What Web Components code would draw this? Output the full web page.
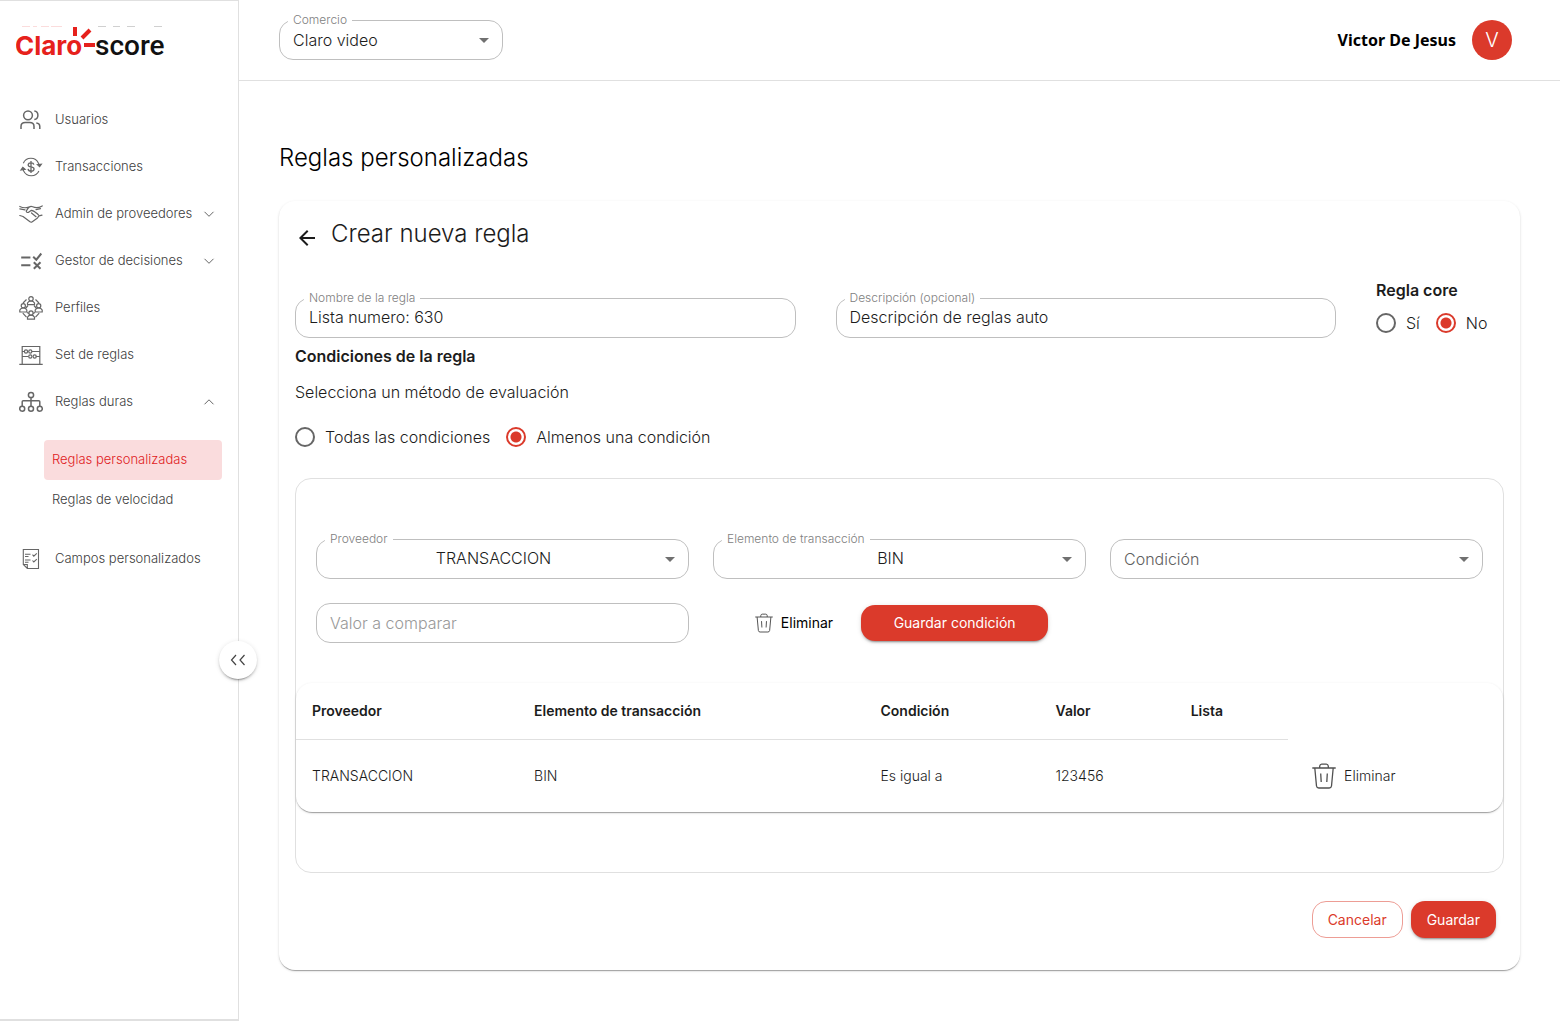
<!DOCTYPE html>
<html lang="es">
<head>
<meta charset="utf-8">
<meta name="viewport" content="width=device-width, initial-scale=1">
<title>Claro-score</title>
<style>
  :root {
    --red: #db3a2b;
    --ink: #1c1c1c;
    --muted: #808080;
    --line: #e0e0e0;
    --outline: #bfbfbf;
    --paper: 0 2px 1px -1px rgba(0,0,0,.2), 0 1px 1px 0 rgba(0,0,0,.14), 0 1px 3px 0 rgba(0,0,0,.12);
    --raised: 0 3px 1px -2px rgba(0,0,0,.2), 0 2px 2px 0 rgba(0,0,0,.14), 0 1px 5px 0 rgba(0,0,0,.12);
  }
  html, body { margin: 0; min-height: 100%; }
  body { background: #fff; color: var(--ink); font-family: Inter, "Liberation Sans", sans-serif; font-size: 16px; font-weight: 300; line-height: 24px; }
</style>
</head>
<body>
<score-app></score-app>
<script>
const base = `*, *::before, *::after { box-sizing: border-box; }
  button, input, select { font: inherit; color: inherit; }
  h1, h2, h3, p { margin: 0; font-weight: inherit; }`;

const icons = {
  users: `<svg viewBox="0 0 24 24" fill="none" stroke="currentColor" stroke-width="1.5"><circle cx="9" cy="7.3" r="4.400"/><path d="M2 21v-2.500c0-2.500 1.700-3.900 4.200-3.900h4.600c2.500 0 4.200 1.400 4.200 3.900V21M15.300 3.100c4.800.500 4.800 7.900 0 8.500M17.300 14.900c2.700.300 3.500 1.800 3.500 3.600V21"/></svg>`,
  money: `<svg viewBox="0 0 24 24" fill="none" stroke="currentColor" stroke-width="1.100"><path d="M4.300 8.200C7.200 1.700 16.500 1.500 19.600 8.400l.7 2M19.900 16C17 22.300 7.800 22.600 4.500 15.800l-.6-1.800"/><path d="M18.300 9.600l2.300 2 1.800-2.500zM1.900 15l1.900-2.700 2.400 2z" fill="currentColor"/><path d="M14.800 9.700c-.2-1.300-1.300-1.900-2.700-1.900-3.700 0-3.800 3.600-.7 4.100l1.500.3c3.100.6 2.800 4-.8 4-1.700 0-2.900-.8-3-2.300M12 6v12" stroke-width="1.300"/></svg>`,
  hands: `<svg viewBox="0 0 24 24" fill="none" stroke="currentColor" stroke-width="1.200" stroke-linejoin="round" stroke-linecap="round"><path d="M.8 4.500c3 1.500 5.800 1.600 8.900.7M23.200 3.900c-3 1.800-6.700 2.200-9.500.9-1.900-.8-3.600 0-4.700 1.500L7.500 8.600c-.8 1.400 1 2.700 2.800 1.200l2.100-1.500c3 .2 4.800 2.500 7.100 4.600M.8 6.900l5.200 1M21.500 6.600l-4.500 1.100M.8 13.500l3.200 1 7 5.300c.8.500 1.500.4 2.300-.1l5.200-3.800 1.500-2 3-.7M12.500 11l4.500 3.700"/></svg>`,
  decide: `<svg viewBox="0 0 24 24" fill="none" stroke="currentColor" stroke-width="2"><path d="M2.200 8.400h9.200M2.200 16.300h9.200M14.200 7.700l3.100 3 5-6.200M14.800 13.200l6.700 6.500M21.500 13.200l-6.700 6.500"/></svg>`,
  people: `<svg viewBox="0 0 24 24" fill="none" stroke="currentColor" stroke-width="1.200"><circle cx="12" cy="2.800" r="2.200"/><path d="M8.500 8.700V7q1-2 3.500-2t3.500 2v1.700z"/><circle cx="4.300" cy="9.800" r="2.100"/><path d="M.8 16v-2q1-2 3.500-2t3.500 2v2z"/><circle cx="19.700" cy="9.800" r="2.100"/><path d="M16.200 16v-2q1-2 3.500-2t3.500 2v2z"/><circle cx="12" cy="17" r="2.100"/><path d="M8.500 23.200v-2q1-2 3.500-2t3.500 2v2zM7.500 3.500L4 7M16.500 3.500L20 7M3.800 17.200l3.700 4M20.200 17.200l-3.700 4M9 9.500l-2.500 3M15 9.500l2.500 3M8 16.500l2 1M16 16.500l-2 1"/></svg>`,
  abacus: `<svg viewBox="0 0 24 24" fill="none" stroke="currentColor" stroke-width="1.200"><path d="M.3 21.300h23.400M3.200 21V3.500h17.600V21M3.200 8.500h2.100M12.600 8.500h8.200M3.200 13.500h6.100M16.700 13.500h4.100"/><circle cx="7" cy="8.500" r="1.600"/><circle cx="11.300" cy="8.500" r="1.600"/><circle cx="11.300" cy="13.500" r="1.600"/><circle cx="15.700" cy="13.500" r="1.600"/></svg>`,
  tree: `<svg viewBox="0 0 24 24" fill="none" stroke="currentColor" stroke-width="1.500"><circle cx="12" cy="5" r="2.600"/><circle cx="3.200" cy="18.800" r="2.500"/><circle cx="12" cy="18.800" r="2.500"/><circle cx="20.800" cy="18.800" r="2.500"/><path d="M12 7.600v8.700M3.200 16.300v-4.500q0-1 1-1h15.600q1 0 1 1v4.500"/></svg>`,
  checklist: `<svg viewBox="0 0 24 24" fill="none" stroke="currentColor" stroke-width="1.100"><path d="M4.300 2.500h15.200v19H8.300l-4-4zM4.300 17.500h4v4M6 7.200h5.500M6 9.500h3.500M6 13h5.500M6 15.300h3.500M13.500 7.700l1.300 1.400 3-2.800M13.500 13.500l1.300 1.400 3-2.800"/></svg>`,
  down: `<svg viewBox="0 0 12 12" fill="none" stroke="currentColor"><path d="M1.500 3.800L6 8.300l4.500-4.500"/></svg>`,
  up: `<svg viewBox="0 0 12 12" fill="none" stroke="currentColor"><path d="M1.500 8.300L6 3.800l4.500 4.500"/></svg>`,
  collapse: `<svg viewBox="0 0 16 16" fill="none" stroke="currentColor" stroke-width="1.200"><path d="M6 3L1.500 8 6 13M14.500 3L10 8l4.500 5"/></svg>`,
  back: `<svg viewBox="0 0 24 24" fill="currentColor"><path d="M20 11H7.830l5.590-5.590L12 4l-8 8 8 8 1.410-1.410L7.830 13H20z"/></svg>`,
  trash: `<svg viewBox="0 0 24 26" fill="none" stroke="currentColor" stroke-width="1.300"><path d="M.3 5h23.400M7.700 5V3.200q.3-2 2-2h4.600q1.700 0 2 2V5M2.800 5l1.700 18q.3 2 2.300 2h10.400q2 0 2.300-2L21.200 5M8.700 10.500l.5 8.500M15.300 10.500l-.5 8.500"/></svg>`
};

const define = (name, render) => customElements.define(name, class extends HTMLElement {
  connectedCallback() {
    if (this.shadowRoot) return;
    this.attachShadow({ mode: 'open' }).innerHTML = render(this);
  }
});

define('score-icon', el => `<style>
  :host { display: block; flex: none; width: 24px; height: 24px; }
  svg { display: block; width: 100%; height: 100%; }
  </style>${icons[el.getAttribute('name')]}`);

define('score-logo', () => `<style>
  :host { display: block; }
  svg { display: block; }
  .claro { font: 700 26px Inter, sans-serif; fill: #e6211c; }
  .score { font: 500 28px Roboto, sans-serif; fill: #111; }
  </style>
  <svg width="152" height="36" viewBox="0 0 152 36" role="img" aria-label="Claro-score">
    <path d="M6 .500h8M17 .500h4M25 .500h8M35 .500h11" stroke="#fbdcdc"/>
    <path d="M82 .500h8M97 .500h7M111 .500h8M138 .500h8" stroke="#d0d0d0"/>
    <text class="claro" x="-1" y="29">Claro</text>
    <text class="score" x="79" y="29">score</text>
    <path d="M59 1v9M66 12l8-8M68 19h11" stroke="#e6211c" stroke-width="4" fill="none"/>
  </svg>`);

define('nav-item', el => {
  const caret = el.getAttribute('caret');
  return `<style>${base}
  :host { display: block; }
  a { display: flex; align-items: center; gap: 12px; height: 47px; padding: 0 23px 0 19px; color: #404040; font-size: 13px; text-decoration: none; white-space: nowrap; }
  .text { flex: 1; min-width: 0; padding-bottom: 2px; }
  score-icon { color: #666; }
  .caret { width: 12px; height: 12px; margin-left: -12px; }
  </style>
  <a href="#"><score-icon name="${el.getAttribute('icon')}"></score-icon><span class="text"><slot></slot></span>${caret ? `<score-icon class="caret" name="${caret}"></score-icon>` : ''}</a>`;
});

define('sub-item', () => `<style>${base}
  :host { display: block; }
  a { display: flex; align-items: center; height: 40px; padding: 0 8px 2px; border-radius: 4px; color: #404040; font-size: 13px; text-decoration: none; white-space: nowrap; }
  :host([active]) a { background: #fadcdd; color: #e01a22; }
  </style><a href="#"><slot></slot></a>`);

define('side-bar', () => `<style>${base}
  :host { display: block; position: relative; border: 1px solid var(--line); border-left: 0; border-bottom-width: 2px; }
  header { padding: 25px 16px 34px; }
  .sub { padding: 15px 16px 15px 44px; }
  .toggle { position: absolute; right: -19px; top: 640px; display: grid; place-items: center; width: 38px; height: 38px; padding: 0; border: 0; border-radius: 50%; background: #fff; color: #444; box-shadow: var(--raised); }
  .toggle score-icon { width: 16px; height: 16px; }
  </style>
  <header><score-logo></score-logo></header>
  <nav>
    <nav-item icon="users">Usuarios</nav-item>
    <nav-item icon="money">Transacciones</nav-item>
    <nav-item icon="hands" caret="down">Admin de proveedores</nav-item>
    <nav-item icon="decide" caret="down">Gestor de decisiones</nav-item>
    <nav-item icon="people">Perfiles</nav-item>
    <nav-item icon="abacus">Set de reglas</nav-item>
    <nav-item icon="tree" caret="up">Reglas duras</nav-item>
    <div class="sub"><sub-item active>Reglas personalizadas</sub-item><sub-item>Reglas de velocidad</sub-item></div>
    <nav-item icon="checklist">Campos personalizados</nav-item>
  </nav>
  <button class="toggle" aria-label="Contraer menú"><score-icon name="collapse"></score-icon></button>`);

define('outlined-field', el => {
  const label = el.getAttribute('label') || '';
  const value = el.getAttribute('value') || '';
  const hint = el.getAttribute('hint') || '';
  const select = el.hasAttribute('select');
  const aria = label ? '' : ` aria-label="${hint}"`;
  return `<style>${base}
  :host { display: block; position: relative; height: 40px; }
  label { position: absolute; left: 9px; top: -8px; padding: 0 5px; background: #fff; color: var(--muted); font-size: 12px; line-height: 16px; white-space: nowrap; }
  input, select { display: block; width: 100%; height: 40px; margin: 0; padding: 0 13px; border: 1px solid var(--outline); border-radius: 14px; background: none; outline: 0; appearance: none; }
  select { padding-right: 31px; }
  :host([value]) input, :host([centered]) select { padding-bottom: 2px; }
  :host([centered]) select { text-align: center; text-align-last: center; }
  :host([empty]) select { color: #606060; }
  input::placeholder { color: #999; opacity: 1; }
  .arrow { position: absolute; right: 14px; top: 18px; border: 5px solid transparent; border-top-color: #707070; border-bottom: 0; pointer-events: none; }
  </style>
  ${select
    ? `<select id="f"${aria}><option>${value || hint}</option></select><span class="arrow"></span>`
    : `<input id="f" type="text" value="${value}" placeholder="${hint}"${aria}>`}
  ${label ? `<label for="f">${label}</label>` : ''}`;
});

define('radio-pair', el => {
  const options = el.getAttribute('options').split('|');
  return `<style>${base}
  :host { display: flex; gap: 16px; }
  label { display: flex; align-items: center; gap: 10px; white-space: nowrap; }
  input { appearance: none; flex: none; width: 20px; height: 20px; margin: 0; border: 2px solid #666; border-radius: 50%; }
  input:checked { border-color: var(--red); background: radial-gradient(circle, var(--red) 5px, transparent 6px); }
  </style>${options.map((o, i) => `<label><input type="radio" name="r"${i === 1 ? ' checked' : ''}>${o}</label>`).join('')}`;
});

define('action-button', () => `<style>${base}
  :host { display: block; }
  button { display: flex; align-items: center; justify-content: center; gap: 8px; width: 100%; height: 36px; padding: 0 16px; border: 0; border-radius: 14px; background: none; font-size: 14px; font-weight: 400; white-space: nowrap; }
  :host([kind=solid]) button { background: var(--red); color: #fff; box-shadow: var(--raised); }
  :host([kind=outline]) button { border: 1px solid #ed9d95; padding: 0 15px; color: var(--red); }
  :host([kind=text]) button { padding: 0 8px; color: #000; }
  :host([kind=row]) button { padding: 0 8px; font-weight: 300; }
  :host([tall]) button { height: 37px; }
  </style><button type="button"><slot></slot></button>`);

define('condition-table', () => `<style>${base}
  :host { display: block; border-radius: 16px; background: #fff; box-shadow: var(--paper); }
  table { width: 100%; table-layout: fixed; border-collapse: collapse; font-size: 14px; }
  th, td { padding: 0 16px; text-align: left; white-space: nowrap; }
  th { height: 56px; border-bottom: 1px solid var(--line); font-weight: 600; }
  th:empty { border: 0; }
  td { height: 73px; }
  td:last-child { padding: 0; }
  td action-button { width: max-content; margin-left: 16px; }
  score-icon { height: 26px; color: #505050; }
  </style>
  <table>
    <colgroup><col style="width:18.4%"><col style="width:28.7%"><col style="width:14.5%"><col style="width:11.2%"><col style="width:9.4%"><col></colgroup>
    <thead><tr><th>Proveedor</th><th>Elemento de transacción</th><th>Condición</th><th>Valor</th><th>Lista</th><th></th></tr></thead>
    <tbody><tr><td>TRANSACCION</td><td>BIN</td><td>Es igual a</td><td>123456</td><td></td>
      <td><action-button kind="row"><score-icon name="trash"></score-icon>Eliminar</action-button></td></tr></tbody>
  </table>`);

define('condition-box', () => `<style>${base}
  :host { display: block; padding: 60px 0; border: 1px solid var(--line); border-radius: 16px; }
  .grid { display: grid; grid-template-columns: repeat(3, 1fr); gap: 24px; padding: 0 20px 40px; }
  .actions { display: flex; align-items: center; justify-content: center; gap: 20px; padding-right: 4px; }
  .save { width: 187px; }
  .bin { width: 18px; height: 20px; color: #505050; }
  </style>
  <div class="grid">
    <outlined-field select centered label="Proveedor" value="TRANSACCION"></outlined-field>
    <outlined-field select centered label="Elemento de transacción" value="BIN"></outlined-field>
    <outlined-field select empty hint="Condición"></outlined-field>
    <outlined-field hint="Valor a comparar"></outlined-field>
    <div class="actions">
      <action-button kind="text"><score-icon class="bin" name="trash"></score-icon>Eliminar</action-button>
      <action-button class="save" kind="solid">Guardar condición</action-button>
    </div>
  </div>
  <condition-table></condition-table>`);

define('rule-card', () => `<style>${base}
  :host { display: block; padding: 16px 16px 32px; border-radius: 16px; background: #fff; box-shadow: var(--paper); }
  header { display: flex; align-items: flex-end; gap: 12px; height: 33px; }
  header button { padding: 0; border: 0; background: none; }
  h2 { font-size: 24px; line-height: 33px; }
  .fields { display: grid; grid-template-columns: 1fr 1fr 128px; align-items: end; gap: 40px; padding-top: 28px; }
  .core { display: grid; gap: 9px; padding-bottom: 3px; }
  h3 { font-size: 16px; font-weight: 600; }
  .conditions { padding-top: 6px; }
  .conditions p { padding-top: 12px; }
  .method { padding: 21px 0 29px; }
  footer { display: flex; justify-content: flex-end; gap: 8px; padding: 28px 8px 0 0; }
  </style>
  <header><button aria-label="Volver"><score-icon name="back"></score-icon></button><h2>Crear nueva regla</h2></header>
  <div class="fields">
    <outlined-field label="Nombre de la regla" value="Lista numero: 630"></outlined-field>
    <outlined-field label="Descripción (opcional)" value="Descripción de reglas auto"></outlined-field>
    <div class="core"><h3>Regla core</h3><radio-pair options="Sí|No"></radio-pair></div>
  </div>
  <div class="conditions"><h3>Condiciones de la regla</h3><p>Selecciona un método de evaluación</p></div>
  <radio-pair class="method" options="Todas las condiciones|Almenos una condición"></radio-pair>
  <condition-box></condition-box>
  <footer><action-button tall kind="outline">Cancelar</action-button><action-button tall kind="solid">Guardar</action-button></footer>`);

define('top-bar', () => `<style>${base}
  :host { display: flex; align-items: center; justify-content: space-between; height: 81px; padding: 0 48px 0 40px; border-bottom: 1px solid var(--line); }
  outlined-field { width: 224px; }
  .user { display: flex; align-items: center; gap: 16px; color: #000; font-family: "Noto Sans", sans-serif; font-weight: 700; }
  .avatar { display: grid; place-items: center; width: 40px; height: 40px; border-radius: 50%; background: var(--red); color: #fff; font-family: Inter, sans-serif; font-size: 20px; font-weight: 300; }
  </style>
  <outlined-field select label="Comercio" value="Claro video"></outlined-field>
  <div class="user"><span>Victor De Jesus</span><span class="avatar">V</span></div>`);

define('score-app', () => `<style>${base}
  :host { display: grid; grid-template-columns: 239px 1fr; min-height: 100vh; }
  main { padding: 61px 40px 40px; }
  h1 { padding-bottom: 27px; font-size: 24px; line-height: 32px; color: #000; }
  </style>
  <side-bar></side-bar>
  <div><top-bar></top-bar><main><h1>Reglas personalizadas</h1><rule-card></rule-card></main></div>`);
</script>
</body>
</html>
